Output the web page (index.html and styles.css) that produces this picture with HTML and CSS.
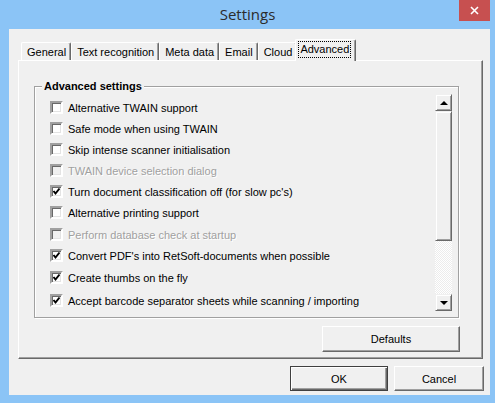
FILE: index.html
```html
<!DOCTYPE html>
<html lang="en">
<head>
    <meta charset="UTF-8">
    <title>Settings</title>
    <link rel="stylesheet" href="styles.css">
</head>
<body>
    <div class="window">
        <div class="titlebar">
            <span></span>
            <div class="title">Settings</div>
            <button class="close" title="Close">
                <svg width="9" height="9" viewBox="0 0 9 9"><path d="M1 1 L8 8 M8 1 L1 8" stroke="#fff" stroke-width="1.6" fill="none"/></svg>
            </button>
        </div>

        <div class="client">
            <div class="tabs">
                <div class="tab">General</div>
                <div class="tab">Text recognition</div>
                <div class="tab">Meta data</div>
                <div class="tab">Email</div>
                <div class="tab">Cloud</div>
                <div class="tab active"><span class="focus">Advanced</span></div>
            </div>

            <div class="pane">
                <fieldset class="group">
                    <legend>Advanced settings</legend>
                    <div class="group-body">
                        <ul class="options">
                            <li class="option"><span class="check"></span>Alternative TWAIN support</li>
                            <li class="option"><span class="check"></span>Safe mode when using TWAIN</li>
                            <li class="option"><span class="check"></span>Skip intense scanner initialisation</li>
                            <li class="option disabled"><span class="check"></span>TWAIN device selection dialog</li>
                            <li class="option"><span class="check checked"></span>Turn document classification off (for slow pc's)</li>
                            <li class="option"><span class="check"></span>Alternative printing support</li>
                            <li class="option disabled step"><span class="check"></span>Perform database check at startup</li>
                            <li class="option"><span class="check checked"></span>Convert PDF's into RetSoft-documents when possible</li>
                            <li class="option step"><span class="check checked"></span>Create thumbs on the fly</li>
                            <li class="option step2"><span class="check checked"></span>Accept barcode separator sheets while scanning / importing</li>
                        </ul>
                        <div class="scrollbar">
                            <div class="sb-btn"><span class="arrow up"></span></div>
                            <div class="sb-thumb"></div>
                            <div class="sb-track"></div>
                            <div class="sb-btn"><span class="arrow down"></span></div>
                        </div>
                    </div>
                </fieldset>
                <div class="pane-actions">
                    <button class="btn btn-wide">Defaults</button>
                </div>
            </div>

            <div class="dialog-actions">
                <button class="btn btn-ok default">OK</button>
                <button class="btn btn-cancel">Cancel</button>
            </div>
        </div>
    </div>
</body>
</html>
```

FILE: styles.css
```css
body {
    margin: 0;
    font-family: "Liberation Sans", Arial, sans-serif;
    font-size: 11px;
    color: #000;
}
.window {
    width: 495px;
    height: 403px;
    background: #8bc4f6;
    display: flex;
    flex-direction: column;
}
.titlebar {
    height: 29px;
    display: grid;
    grid-template-columns: 36px 1fr 36px;
}
.title {
    text-align: center;
    font-family: "Open Sans", "Noto Sans", sans-serif;
    font-size: 15px;
    line-height: 29px;
    color: #2b2b2b;
}
.close {
    width: 31px;
    height: 21px;
    border: none;
    padding: 0;
    background: #c75050;
    display: flex;
    align-items: center;
    justify-content: center;
}
.client {
    flex: 1;
    margin: 0 5px 8px 9px;
    background: #f0f0f0;
    padding: 10px 7px 4px 9px;
    display: flex;
    flex-direction: column;
}

/* tabs */
.tabs {
    height: 21px;
    display: flex;
    align-items: flex-end;
    padding-left: 3px;
    position: relative;
    z-index: 1;
}
.tab {
    height: 17px;
    line-height: 18px;
    padding: 0 4px 0 5px;
    border-top: 1px solid #fff;
    border-left: 1px solid #fff;
    border-right: 1px solid #696969;
    box-shadow: inset -1px 0 0 #a0a0a0;
    border-radius: 2px 2px 0 0;
}
.tab.active {
    height: 21px;
    margin: 0 -2px -1px -2px;
    padding: 0 5px 0 3px;
    background: #f0f0f0;
    line-height: 18px;
}
.focus {
    display: inline-block;
    outline: 1px dotted #000;
    line-height: 15px;
    padding: 0 1px;
    margin-top: 1px;
}
.pane {
    flex: 1;
    border: 1px solid;
    border-color: #fff #696969 #696969 #fff;
    box-shadow: inset -1px -1px 0 #a0a0a0;
    padding: 19px 23px 6px 15px;
}

/* group box */
.group {
    margin: 0;
    padding: 0 6px 6px 7px;
    border: 1px solid #a0a0a0;
    box-shadow: 1px 1px 0 #fff, inset 1px 1px 0 #fff;
}
.group legend {
    font-weight: bold;
    line-height: 13px;
    padding: 0 2px;
    background: #f0f0f0;
}
.group-body {
    display: flex;
    margin-top: 1px;
}
.options {
    flex: 1;
    list-style: none;
    margin: 0;
    padding: 3px 0 0 8px;
}
.option {
    height: 21px;
    display: flex;
    align-items: center;
    gap: 5px;
}
.option.step {
    margin-top: 1px;
}
.option.step2 {
    margin-top: 2px;
}
.option.disabled {
    color: #a0a0a0;
    text-shadow: 1px 1px 0 #fff;
}
.check {
    width: 9px;
    height: 9px;
    background: #fff;
    border: 2px solid;
    border-color: #a0a0a0 #fff #fff #a0a0a0;
    box-shadow: inset 1px 1px 0 #696969, inset -1px -1px 0 #e3e3e3;
    flex: none;
}
.option.disabled .check {
    background: #f0f0f0;
}
.check.checked {
    background: #fff url("data:image/svg+xml,%3Csvg xmlns='http://www.w3.org/2000/svg' width='9' height='9'%3E%3Cpath d='M1.5 4 L3.5 6.5 L7.5 1.5' stroke='%23000' stroke-width='2' fill='none'/%3E%3C/svg%3E") center no-repeat;
}

/* scrollbar */
.scrollbar {
    width: 17px;
    display: flex;
    flex-direction: column;
}
.sb-btn,
.sb-thumb {
    box-sizing: border-box;
    border: 1px solid;
    border-color: #f0f0f0 #696969 #696969 #f0f0f0;
    box-shadow: inset 1px 1px 0 #fff, inset -1px -1px 0 #a0a0a0;
    background: #f0f0f0;
}
.sb-btn {
    height: 17px;
    display: flex;
    align-items: center;
    justify-content: center;
}
.sb-thumb {
    height: 130px;
}
.sb-track {
    flex: 1;
    background: repeating-conic-gradient(#fff 0 25%, #ececec 0 50%) 0 0 / 2px 2px;
}
.arrow {
    width: 0;
    height: 0;
    border-left: 4px solid transparent;
    border-right: 4px solid transparent;
}
.arrow.up {
    border-bottom: 4px solid #000;
}
.arrow.down {
    border-top: 4px solid #000;
}

/* buttons */
.btn {
    font-family: "Liberation Sans", Arial, sans-serif;
    font-size: 11px;
    color: #000;
    background: #f0f0f0;
    border: 1px solid;
    border-color: #fff #696969 #696969 #fff;
    box-shadow: inset -1px -1px 0 #a0a0a0;
    padding: 0;
}
.pane-actions {
    display: flex;
    justify-content: flex-end;
    margin-top: 8px;
    margin-right: -1px;
}
.btn-wide {
    width: 138px;
    height: 26px;
}
.dialog-actions {
    display: flex;
    justify-content: flex-end;
    gap: 6px;
    margin-top: 7px;
    margin-right: -1px;
}
.btn-ok {
    width: 98px;
    height: 25px;
}
.btn-cancel {
    width: 90px;
    height: 25px;
}
.btn.default {
    border-color: #404040;
    box-shadow: inset 1px 1px 0 #fff, inset -1px -1px 0 #696969, inset -2px -2px 0 #a0a0a0;
}
```
